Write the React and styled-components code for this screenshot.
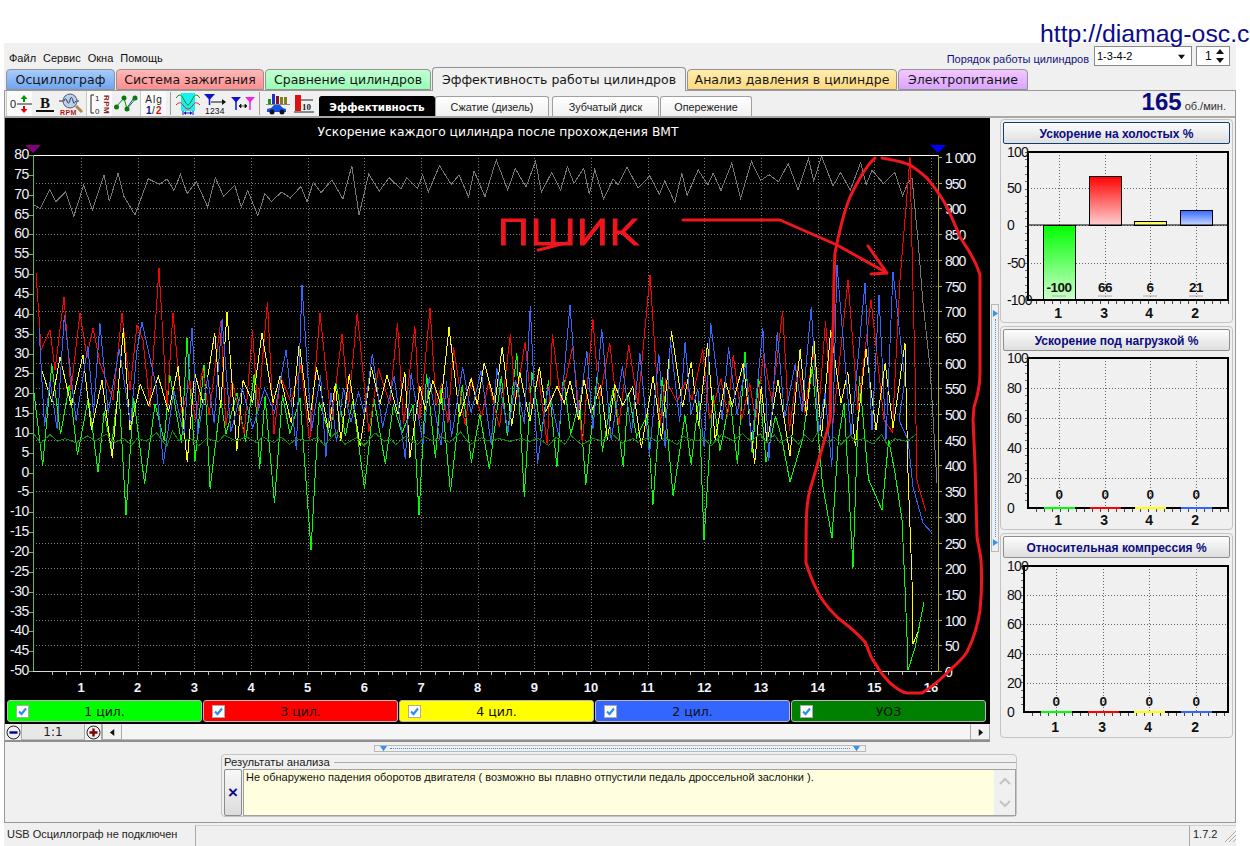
import React from 'react'
import styled, { createGlobalStyle } from 'styled-components'

const GlobalStyle = createGlobalStyle`
  html, body { margin: 0; padding: 0; background: #fff; overflow: hidden; }
  * { box-sizing: border-box; }
`

const uiFont = `"Liberation Sans", Arial, sans-serif`
const wideFont = `"DejaVu Sans", Verdana, sans-serif`

const Page = styled.div`
  position: relative;
  width: 1250px;
  height: 846px;
  padding: 43px 0 0 4px;
  background: #fff;
  overflow: hidden;
  font-family: ${uiFont};
`
const Url = styled.div`
  position: absolute;
  left: 1040px;
  top: 20px;
  font-size: 24.8px;
  color: #0b0b8c;
  white-space: nowrap;
  z-index: 5;
`
const Window = styled.div`
  width: 1232px;
  height: 803px;
  background: #f0f0f0;
  display: flex;
  flex-direction: column;
`
const TopRow = styled.div`
  height: 25px;
  flex: none;
  display: flex;
  align-items: center;
  padding: 5px 6px 0 5px;
`
const MenuItem = styled.span`
  font-size: 11px;
  color: #111;
  margin-right: 7px;
`
const OrderLabel = styled.span`
  margin-left: auto;
  font-size: 11px;
  color: #101080;
  margin-right: 5px;
  position: relative;
  top: 1px;
`
const SelectBox = styled.div`
  width: 98px;
  height: 20px;
  border: 1px solid #8a8a8a;
  background: #fff;
  display: flex;
  align-items: center;
  justify-content: space-between;
  font-size: 11px;
  padding: 0 6px 0 2px;
  margin: -4px 4px 0 0;
`
const SpinBox = styled(SelectBox)`
  width: 34px;
  margin: -4px 0 0 0;
  font-size: 12px;
  padding: 0 4px 0 8px;
`
const TabRow = styled.div`
  height: 22px;
  flex: none;
  display: flex;
  align-items: flex-end;
  padding-left: 2px;
  gap: 1px;
  position: relative;
  z-index: 2;
`
const Tab = styled.div`
  width: ${p => p.$w}px;
  height: ${p => (p.$active ? 24 : 21)}px;
  margin-bottom: ${p => (p.$active ? -1 : 0)}px;
  background: ${p => p.$bg};
  border: 1px solid #929292;
  border-bottom: ${p => (p.$active ? 'none' : '1px solid #929292')};
  border-radius: 4px 4px 0 0;
  font-family: ${wideFont};
  font-size: 12.5px;
  color: #161616;
  display: flex;
  align-items: center;
  justify-content: center;
  white-space: nowrap;
`
const Frame = styled.div`
  width: 1232px;
  height: 733px;
  flex: none;
  border: 1px solid #999;
  display: flex;
  flex-direction: column;
`
const Toolbar = styled.div`
  height: 27px;
  flex: none;
  display: flex;
  align-items: flex-end;
  padding-left: 1px;
  border-bottom: 2px solid #a8a8a8;
`
const IconBtn = styled.div`
  width: ${p => p.$w || 26}px;
  height: 25px;
  flex: none;
  display: flex;
  align-items: center;
  justify-content: center;
  background: ${p => (p.$pressed ? '#fafafa' : 'transparent')};
  border-left: ${p => (p.$pressed ? '1px solid #c8c8c8' : 'none')};
`
const ToolSep = styled.div`
  width: 1px;
  height: 23px;
  flex: none;
  background: #a0a0a0;
  margin: 0 ${p => p.$r || 4}px 1px ${p => p.$l || 4}px;
`
const SubTab = styled.div`
  width: ${p => p.$w}px;
  height: 20px;
  flex: none;
  margin-left: ${p => p.$ml || 0}px;
  margin-right: ${p => p.$gap || 0}px;
  border: 1px solid ${p => (p.$active ? '#000' : '#a0a0a0')};
  border-bottom: none;
  border-radius: 3px 3px 0 0;
  background: ${p => (p.$active ? '#000' : 'linear-gradient(#fff, #f0f0f0)')};
  color: ${p => (p.$active ? '#fff' : '#222')};
  font-family: ${p => (p.$active ? wideFont : uiFont)};
  font-weight: ${p => (p.$active ? 700 : 400)};
  font-size: ${p => (p.$active ? 10.4 : 10.8)}px;
  display: flex;
  align-items: center;
  justify-content: center;
`
const Rpm = styled.div`
  margin-left: auto;
  margin-right: 9px;
  align-self: center;
  display: flex;
  align-items: baseline;
  gap: 3px;
  color: #0b0b7c;
  font-size: 24px;
  font-weight: 700;
  line-height: 26px;
  small { font-size: 11px; font-weight: 400; color: #333; }
`
const Content = styled.div`
  height: 624px;
  flex: none;
  display: flex;
`
const ChartCol = styled.div`
  width: 985px;
  flex: none;
  background: #000;
  border-bottom: 2px solid #8f8f8f;
  display: flex;
  flex-direction: column;
  svg { display: block; flex: none; }
`
const Legend = styled.div`
  height: 26px;
  flex: none;
  padding: 2px;
  display: flex;
  gap: 1px;
`
const LegendBtn = styled.div`
  position: relative;
  width: 195px;
  background: ${p => p.$bg};
  border: 1px solid #b8b8b8;
  border-radius: 3px;
  font-family: ${wideFont};
  font-size: 12.5px;
  color: #101010;
  display: flex;
  align-items: center;
  justify-content: center;
`
const Check = styled.span`
  position: absolute;
  left: 8px;
  top: 4px;
  width: 13px;
  height: 13px;
  background: #fff;
  border: 1px solid #aaa;
  display: flex;
`
const ScrollRow = styled.div`
  height: 16px;
  flex: none;
  background: #f0f0f0;
  display: flex;
  align-items: stretch;
  padding-left: 1px;
`
const RoundBtn = styled.div`
  width: ${p => p.$w || 16}px;
  flex: none;
  border-right: 1px solid #aaa;
  display: flex;
  align-items: center;
  justify-content: center;
`
const Zoom = styled.div`
  width: 63px;
  flex: none;
  background: #e8e8e8;
  border-right: 1px solid #aaa;
  border-bottom: 1px solid #bbb;
  font-family: ${wideFont};
  font-size: 12px;
  text-align: center;
  line-height: 17px;
  color: #222;
`
const ArrowBtn = styled.div`
  width: 20px;
  flex: none;
  background: #f2f2f2;
  border: 1px solid #aaa;
  border-top-color: #eee;
  display: flex;
  align-items: center;
  justify-content: center;
`
const Track = styled.div`
  flex: 1;
  background: #f5f5f5;
  border-bottom: 1px solid #bbb;
`
const SplitCol = styled.div`
  width: 10px;
  flex: none;
  display: flex;
  align-items: center;
  justify-content: center;
`
const SplitHandle = styled.div`
  width: 8px;
  height: 248px;
  margin-top: -4px;
  border: 1px solid #b8b8b8;
  display: flex;
  flex-direction: column;
  align-items: center;
  justify-content: space-between;
  padding: 5px 0;
`
const Dots = styled.div`
  flex: 1;
  width: 0;
  border-left: 1px dotted #3b90ee;
  margin: 2px 0;
`
const Side = styled.div`
  width: 233px;
  flex: none;
  padding-top: 1px;
  display: flex;
  flex-direction: column;
  gap: 3px;
`
const Panel = styled.div`
  height: ${p => p.$h}px;
  flex: none;
  border: 1px solid #c4c4c4;
  border-radius: 4px;
  padding-top: 2px;
  svg { display: block; }
`
const PanelHead = styled.div`
  height: 22px;
  margin: 0 2px;
  padding-top: 1px;
  border: 1px solid ${p => (p.$focused ? '#0b3f73' : '#8d8d8d')};
  border-radius: 2px;
  background: linear-gradient(#fdfdfd, #dedede);
  color: #0b0b80;
  font-size: 12px;
  font-weight: 700;
  display: flex;
  align-items: center;
  justify-content: center;
`
const Lower = styled.div`
  flex: 1;
  display: flex;
  flex-direction: column;
`
const HSplit = styled.div`
  width: 492px;
  height: 7px;
  margin: 3px auto 0;
  border: 1px solid #b8b8b8;
  display: flex;
  align-items: center;
  justify-content: space-between;
  padding: 0 5px;
`
const HDots = styled.div`
  flex: 1;
  height: 0;
  border-top: 1px dotted #3b90ee;
  margin: 0 3px;
`
const GroupBox = styled.div`
  width: 796px;
  height: 63px;
  margin: 2px 0 0 216px;
  border: 1px solid #c4c4c4;
  border-radius: 4px;
  padding: 0 0 0 2px;
`
const GroupTitle = styled.div`
  height: 14px;
  display: flex;
  align-items: center;
  font-size: 11.3px;
  color: #222;
  gap: 4px;
  i { flex: 1; height: 1px; background: #aaa; margin-top: 1px; }
`
const GroupBody = styled.div`
  display: flex;
  height: 47px;
  gap: 1px;
`
const CloseBtn = styled.div`
  width: 18px;
  flex: none;
  border: 1px solid #8d8d8d;
  border-radius: 2px;
  background: linear-gradient(#f8f8f8, #dcdcdc);
  color: #0b0b80;
  font-size: 17px;
  font-weight: 700;
  display: flex;
  align-items: center;
  justify-content: center;
`
const Memo = styled.div`
  flex: 1;
  border: 1px solid #a0a0a0;
  display: flex;
`
const MemoText = styled.div`
  flex: 1;
  background: #ffffe0;
  font-size: 11px;
  color: #111;
  padding: 1px 0 0 2px;
`
const MemoBar = styled.div`
  width: 21px;
  flex: none;
  display: flex;
  flex-direction: column;
  align-items: center;
  justify-content: space-around;
`
const Status = styled.div`
  flex: 1;
  display: flex;
  padding-top: 2px;
  font-size: 11px;
  color: #222;
`
const StatusCell = styled.div`
  width: ${p => (p.$w ? `${p.$w}px` : 'auto')};
  flex: ${p => (p.$w ? 'none' : 1)};
  margin-left: ${p => p.$ml || 0}px;
  border-left: ${p => (p.$first ? 'none' : '1px solid #a8a8a8')};
  border-top: 1px solid ${p => (p.$first ? 'transparent' : '#d0d0d0')};
  padding: 2px 0 0 3px;
  display: flex;
  justify-content: space-between;
  white-space: nowrap;
`
const Grip = styled.svg`
  margin-top: 2px;
`

/* ---------- data for the big chart ---------- */

const rng = seed => () => {
  seed = (seed + 0x6d2b79f5) | 0
  let t = Math.imul(seed ^ (seed >>> 15), 1 | seed)
  t = (t + Math.imul(t ^ (t >>> 7), 61 | t)) ^ t
  return ((t ^ (t >>> 14)) >>> 0) / 4294967296
}

// zigzag knots between x0 and x1, peaks force a point at a known place
const zigzag = ({ seed, x0, x1, base, hi, lo, hiEnd, peaks = [], tail = [] }) => {
  const r = rng(seed)
  const pts = []
  let x = x0
  let up = true
  while (x < x1) {
    const high = hiEnd && x > 830 ? hiEnd : hi
    const b = typeof base === 'function' ? base(x) : base
    const y = up ? b - (0.12 + 0.88 * r() ** 1.5) * high : b + (0.1 + 0.9 * r() ** 1.6) * lo
    if (!peaks.some(p => Math.abs(p[0] - x) < 5)) pts.push([x, y])
    x += 5 + r() * 7
    up = !up
  }
  return [...pts, ...peaks].sort((a, b) => a[0] - b[0]).concat(tail).map(p => p.join(',')).join(' ')
}

const series = [
  {
    color: '#00ff00',
    pts: zigzag({
      seed: 11, x0: 34, x1: 893, base: 425, hi: 75, lo: 80,
      peaks: [[34, 393], [126, 515], [187, 338], [311, 550], [419, 515], [704, 540], [790, 482], [832, 538], [853, 568], [882, 510]],
      tail: [[895, 473], [902, 520], [905, 587], [907, 637], [908, 670], [915, 648], [924, 602]],
    }),
  },
  {
    color: '#ff0000',
    pts: zigzag({
      seed: 23, x0: 190, x1: 898, base: 395, hi: 95, lo: 50, hiEnd: 120,
      peaks: [[430, 308], [650, 275], [848, 280], [858, 410], [871, 300], [884, 420]],
      tail: [[900, 280], [906, 207], [910, 157], [913, 290], [915, 367], [917, 480], [921, 495], [926, 511]],
    }).replace(/^/, '36,273 39,317 41,350 50,330 55,370 64,297 71,390 80,313 87,357 93,328 100,363 113,400 122,313 130,390 137,325 143,340 150,407 159,268 167,407 173,313 182,413 '),
  },
  {
    color: '#ffff00',
    pts: zigzag({
      seed: 37, x0: 40, x1: 902, base: 395, hi: 70, lo: 70,
      peaks: [[227, 312], [42, 371], [60, 357], [262, 333]],
      tail: [[905, 343], [908, 473], [912, 580], [913, 644], [918, 632]],
    }),
  },
  {
    color: '#3366ff',
    pts: zigzag({
      seed: 51, x0: 39, x1: 905, base: 405, hi: 100, lo: 65, hiEnd: 135,
      peaks: [[39, 328], [142, 322], [302, 285], [570, 305], [837, 265], [851, 435], [865, 283], [872, 430], [879, 295], [886, 440], [893, 272]],
      tail: [[899, 420], [908, 440], [913, 487], [923, 523], [932, 533]],
    }),
  },
]

const grey = zigzag({
  seed: 71, x0: 34, x1: 903, base: x => (x < 395 ? 190 + 8 * Math.sin(x / 33) : 180 + 4 * Math.sin(x / 47)), hi: 20, lo: 22,
  peaks: [[34, 205], [104, 175], [135, 215], [359, 215]],
  tail: [[908, 183], [912, 178], [918, 240], [923, 303], [930, 367], [937, 483]],
})
const darkGreen = zigzag({ seed: 83, x0: 34, x1: 923, base: 440, hi: 9, lo: 7 })

const leftTicks = Array.from({ length: 27 }, (_, i) => ({ label: 80 - i * 5, y: 154 + i * 19.85 }))
const rightTicks = Array.from({ length: 21 }, (_, i) => ({
  label: i === 0 ? '1 000' : String(1000 - i * 50),
  y: 158 + i * 25.7,
}))
const xTicks = Array.from({ length: 16 }, (_, i) => ({ label: i + 1, x: 81 + i * 56.67 }))

const loop = 'M875,158 C868,164 862,173 850,197 C844,212 840,227 835,253 C833,290 834,310 833,330 C831,360 830,393 830,420 C826,436 818,462 810,490 C806,505 806,520 806,563 C810,575 814,585 817,590 C820,598 826,606 838,618 C850,627 858,634 865,642 C869,650 871,660 875,663 C880,672 885,678 890,683 C896,688 902,693 907,693 L922,693 C930,688 940,680 947,673 C955,665 962,660 967,652 C974,638 978,625 980,610 C982,590 982,575 981,560 C980,550 978,545 977,537 L975,463 L973,420 L974,407 C978,395 980,385 980,373 L980,275 C975,258 968,250 960,237 C955,225 950,212 943,200 C938,192 932,184 927,178 C920,172 915,168 910,165 C900,161 892,160 882,158'

const MainChart = () => (
  <svg width="985" height="580" viewBox="5 118 985 580">
    <text x="498" y="136" textAnchor="middle" fill="#fff" fontFamily={wideFont} fontSize="12.3">
      Ускорение каждого цилиндра после прохождения ВМТ
    </text>
    <polygon points="25,145 41,145 33,153" fill="#800080" />
    <polygon points="930,145 946,145 938,153" fill="#0000ff" />

    <g stroke="#7c7c7c" strokeDasharray="1 2" shapeRendering="crispEdges">
      {rightTicks.slice(1, 20).map(t => <line key={t.y} x1="33" x2="938" y1={Math.round(t.y - 1)} y2={Math.round(t.y - 1)} />)}
      {xTicks.map(t => <line key={t.x} y1="155" y2="671" x1={Math.round(t.x)} x2={Math.round(t.x)} />)}
    </g>

    <g fill="none" shapeRendering="crispEdges">
      <polyline points={grey} stroke="#787878" />
      {series.map(s => <polyline key={s.color} points={s.pts} stroke={s.color} />)}
      <polyline points={darkGreen} stroke="#0c8a0c" />
      <line x1="33" x2="938" y1="404" y2="404" stroke="#40e8e8" strokeDasharray="1 2" />
      <line x1="33" x2="938" y1="155" y2="155" stroke="#fff" />
      <line x1="33" x2="33" y1="155" y2="671" stroke="#5cb85c" />
      <line x1="938" x2="938" y1="155" y2="671" stroke="#a8a83c" />
      <line x1="33" x2="938" y1="671" y2="671" stroke="#d8d8d8" />
      {leftTicks.map(t => <line key={t.y} x1="29" x2="33" y1={Math.round(t.y + 1)} y2={Math.round(t.y + 1)} stroke="#5cb85c" />)}
      {rightTicks.map(t => <line key={t.y} x1="938" x2="942" y1={Math.round(t.y - 1)} y2={Math.round(t.y - 1)} stroke="#a8a83c" />)}
      {Array.from({ length: 64 }, (_, i) => 52 + i * 14.17).map(x => (
        <line key={x} x1={Math.round(x)} x2={Math.round(x)} y1="671" y2="675" stroke="#bbb" />
      ))}
    </g>

    <g fontFamily={uiFont} fontSize="14" fill="#f2f2ff">
      {leftTicks.map(t => <text key={t.y} x="29" y={t.y + 5} textAnchor="end" letterSpacing="-0.4">{t.label}</text>)}
      {rightTicks.map(t => <text key={t.y} x="945" y={t.y + 5} letterSpacing="-1">{t.label}</text>)}
    </g>
    <g fontFamily={uiFont} fontSize="13" fontWeight="700" fill="#f2f2ff" textAnchor="middle">
      {xTicks.map(t => <text key={t.x} x={t.x} y="692">{t.label}</text>)}
    </g>

    <g fill="none" stroke="#f0161e" strokeWidth="3" strokeLinecap="round" strokeLinejoin="round">
      <path d={loop} />
      <path d="M683,220 L780,220 L837,245 L887,273 M868,246 L887,273 L871,274" />
      <path d="M538,250 C545,249 555,245 567,243" />
    </g>
    <text x="497" y="245" fill="#f0161e" stroke="#f0161e" strokeWidth="1.1" fontFamily="Roboto, sans-serif" fontWeight="300" fontSize="48" textLength="142" lengthAdjust="spacingAndGlyphs">
      пшик
    </text>
  </svg>
)

/* ---------- side bar charts ---------- */

const barColors = [
  ['#00ff00', '#ccffcc'],
  ['#ff0000', '#ffd0d0'],
  ['#ffff00', '#ffffc0'],
  ['#3366ff', '#c8d8ff'],
]
const barNames = ['1', '3', '4', '2']

const BarChart = ({ id, top, height, left, plotTop, plotBottom, ticks, grids, bars, strokeW = 2, labelY, nameY, marks }) => (
  <svg width="231" height={height} viewBox={`1001 ${top} 231 ${height}`}>
    <defs>
      {barColors.map((c, i) => (
        <linearGradient key={c[0]} id={`${id}${i}`} x1="0" y1="0" x2="0" y2="1">
          <stop offset="0" stopColor={c[0]} />
          <stop offset="1" stopColor={c[1]} />
        </linearGradient>
      ))}
    </defs>
    <g stroke="#666" strokeDasharray="1 2" shapeRendering="crispEdges">
      {ticks.map(t => <line key={t.y} x1={left} x2="1228" y1={t.y} y2={t.y} />)}
      {grids.map(x => <line key={x} x1={x} x2={x} y1={plotTop} y2={plotBottom} />)}
    </g>
    {bars.map((b, i) => b.y1 !== undefined && (
      <rect key={i} x={b.x} y={b.y0} width="32" height={b.y1 - b.y0} fill={`url(#${id}${i})`} stroke="#000" strokeWidth="1" shapeRendering="crispEdges" />
    ))}
    {ticks.filter(t => t.zero).map(t => <line key="z" x1={left} x2="1228" y1={t.y} y2={t.y} stroke="#000" />)}
    {Array.from({ length: 25 }, (_, i) => left + 8 + i * 8).map(x => (
      <line key={x} x1={x} x2={x} y1={plotBottom} y2={plotBottom + 4} stroke="#444" shapeRendering="crispEdges" />
    ))}
    {Array.from({ length: 20 }, (_, i) => plotTop + ((plotBottom - plotTop) * i) / 20).map(y => (
      <line key={y} x1={left - 3} x2={left} y1={y} y2={y} stroke="#666" shapeRendering="crispEdges" />
    ))}
    <rect x={left} y={plotTop} width={1228 - left} height={plotBottom - plotTop} fill="none" stroke="#000" strokeWidth={strokeW} shapeRendering="crispEdges" />
    {bars.map((b, i) => (
      marks ? <line key={i} x1={grids[i] - 7} x2={grids[i] + 7} y1={plotBottom - 4} y2={plotBottom - 4} stroke="#aaa" />
        : <line key={i} x1={grids[i] - 15} x2={grids[i] + 16} y1={plotBottom} y2={plotBottom} stroke={barColors[i][0]} strokeWidth="2" shapeRendering="crispEdges" />
    ))}
    <g fontFamily={uiFont} fontSize="14" fill="#111" letterSpacing="-0.8">
      {ticks.map(t => <text key={t.y} x="1007" y={t.y + 5}>{t.label}</text>)}
    </g>
    <g fontFamily={uiFont} fontSize="13.5" fontWeight="700" fill="#111" textAnchor="middle" letterSpacing="-0.5">
      {bars.map((b, i) => <text key={i} x={grids[i]} y={labelY}>{b.value}</text>)}
      {bars.map((b, i) => <text key={i} x={grids[i] - 1} y={nameY} fontSize="14">{barNames[i]}</text>)}
    </g>
  </svg>
)

const idleBars = [
  { x: 1043, y0: 225, y1: 299, value: -100 },
  { x: 1089, y0: 176, y1: 225, value: 66 },
  { x: 1134, y0: 221, y1: 225, value: 6 },
  { x: 1180, y0: 210, y1: 225, value: 21 },
]
const zeroBars = [{ value: 0 }, { value: 0 }, { value: 0 }, { value: 0 }]
const hundredTicks = (top, step) => [100, 80, 60, 40, 20, 0].map((label, i) => ({ label, y: Math.round(top + i * step) }))

/* ---------- toolbar icons ---------- */

const IconPlusMinus = () => (
  <svg width="24" height="24" viewBox="0 0 24 24">
    <text x="2" y="16" fontFamily={uiFont} fontSize="11" fill="#222">0</text>
    <line x1="9" x2="24" y1="12" y2="12" stroke="#222" />
    <path d="M16 10V6" stroke="#090" strokeWidth="2" /><path d="M12.5 7 16 3l3.500 4z" fill="#090" />
    <path d="M16 14v4" stroke="#e00" strokeWidth="2" /><path d="M12.5 17 16 21l3.500-4z" fill="#e00" />
  </svg>
)
const IconBold = () => (
  <svg width="24" height="24" viewBox="0 0 24 24">
    <text x="12" y="16" textAnchor="middle" fontFamily='"Liberation Serif", serif' fontWeight="700" fontSize="15" fill="#111">B</text>
    <rect x="3" y="18" width="18" height="2" fill="#111" />
  </svg>
)
const IconLens = () => (
  <svg width="26" height="24" viewBox="0 0 26 24">
    <line x1="0" x2="20" y1="9" y2="9" stroke="#224" />
    <circle cx="11" cy="9" r="7" fill="#b8d0ee" stroke="#556" />
    <path d="M5 9c1-3 2-3 3 0s2 3 3-1 2-3 3 1 1 2 3 0" fill="none" stroke="#335" />
    <path d="M17 14l6 6" stroke="#b08a50" strokeWidth="3" />
    <text x="1" y="23" fontFamily={uiFont} fontWeight="700" fontSize="7" fill="#b01818" letterSpacing="0.4">RPM</text>
  </svg>
)
const IconRange = () => (
  <svg width="24" height="24" viewBox="0 0 24 24">
    <path d="M6 3H3v18h3" fill="none" stroke="#222" />
    <text x="7" y="9" fontFamily={uiFont} fontSize="8" fill="#222">1</text>
    <text x="7" y="22" fontFamily={uiFont} fontSize="8" fill="#222">0</text>
    <text transform="translate(16 3) rotate(90)" fontFamily={uiFont} fontWeight="700" fontSize="8" fill="#902020" letterSpacing="0.5">RPM</text>
  </svg>
)
const IconDots = () => (
  <svg width="24" height="24" viewBox="0 0 24 24">
    <path d="M2 15 10 6l3 11 9-11" fill="none" stroke="#0a8a0a" />
    <path d="M13 16l6-9" stroke="#2050e0" fill="none" />
    <g fill="#0a7a0a"><circle cx="2.500" cy="15" r="2.500" /><circle cx="10" cy="6" r="2.500" /><circle cx="13" cy="17" r="2.500" /><circle cx="21" cy="6" r="2.500" /></g>
  </svg>
)
const IconAlg = () => (
  <svg width="22" height="24" viewBox="0 0 22 24" fontFamily={uiFont}>
    <text x="11" y="11" textAnchor="middle" fontSize="10" fill="#222" letterSpacing="1">Alg</text>
    <text x="3" y="22" fontSize="10" fill="#101090" fontWeight="700">1</text>
    <text x="9" y="22" fontSize="10" fill="#222">/</text>
    <text x="13" y="22" fontSize="10" fill="#e01010" fontWeight="700">2</text>
  </svg>
)
const IconWave = () => (
  <svg width="24" height="24" viewBox="0 0 24 24">
    <rect x="5" y="1" width="14" height="18" fill="#19f0f0" />
    <path d="M0 6c3-4 5-4 7 0s4 7 5 7 3-3 5-7 4-4 7 0" fill="none" stroke="#0a8a0a" />
    <path d="M0 13c3-3 5-3 7 0s4 4 5 4 3-1 5-4 4-3 7 0" fill="none" stroke="#e82020" />
    <path d="M7 19v4M17 19v4M8 21h8" stroke="#1010c0" fill="none" />
    <path d="M8 21l2-2v4zM16 21l-2-2v4z" fill="#1010c0" />
  </svg>
)
const IconMarker = () => (
  <svg width="24" height="24" viewBox="0 0 24 24">
    <path d="M1 2h11l-5.500 6z" fill="#1010d0" /><path d="M6.500 7v6" stroke="#1010d0" strokeWidth="1.500" />
    <path d="M8 10h11" stroke="#111" /><path d="M19 7l4 3-4 3z" fill="#111" />
    <text x="2" y="22" fontFamily={uiFont} fontSize="8.500" fill="#111" letterSpacing="0.2">1234</text>
  </svg>
)
const IconMarkers = () => (
  <svg width="24" height="24" viewBox="0 0 24 24">
    <path d="M0 5h10l-5 5.500z" fill="#1010d0" /><path d="M5 9v9" stroke="#1010d0" strokeWidth="1.500" />
    <path d="M14 5h10l-5 5.500z" fill="#f020f0" /><path d="M19 9v9" stroke="#f020f0" strokeWidth="1.500" />
    <path d="M8 14h8M8 14l2-2v4zM16 14l-2-2v4z" fill="#111" stroke="#111" strokeWidth="0.700" />
  </svg>
)
const IconCar = () => (
  <svg width="24" height="24" viewBox="0 0 24 24">
    <rect x="2" y="7" width="3" height="5" fill="#1a9a1a" /><rect x="6" y="2" width="3" height="10" fill="#2030d0" />
    <rect x="10" y="4" width="3" height="8" fill="#801818" /><rect x="14" y="5" width="3" height="7" fill="#808020" />
    <rect x="18" y="5" width="3" height="7" fill="#808020" />
    <rect x="0" y="12" width="24" height="1" fill="#888" />
    <path d="M1 20v-3l4-1 3-3h6l3 3 3 1v3z" fill="#1a50e0" />
    <circle cx="6" cy="20" r="2.500" fill="#112" /><circle cx="16" cy="20" r="2.500" fill="#112" />
  </svg>
)
const IconBar = () => (
  <svg width="20" height="24" viewBox="0 0 20 24">
    <rect x="1" y="3" width="6" height="16" fill="#e01010" />
    <path d="M7 8h12M0 20h20" stroke="#222" fill="none" />
    <text x="8" y="18" fontFamily='"Liberation Serif", serif' fontWeight="700" fontSize="9" fill="#222">10</text>
  </svg>
)

const Tick = () => (
  <svg width="11" height="11" viewBox="0 0 11 11"><path d="M2 5.500 4.500 8 9 2.500" fill="none" stroke="#2f8fef" strokeWidth="2.200" /></svg>
)
const Tri = ({ d, size = 7, color = '#111' }) => (
  <svg width={size} height={size} viewBox="0 0 8 8"><path d={d} fill={color} /></svg>
)
const Chevron = ({ d }) => (
  <svg width="12" height="8" viewBox="0 0 12 8"><path d={d} fill="none" stroke="#c4c4c4" strokeWidth="2" /></svg>
)
const Circle = ({ plus }) => (
  <svg width="15" height="15" viewBox="0 0 15 15">
    <circle cx="7.500" cy="7.500" r="6.500" fill="#eee" stroke="#222" />
    <path d={plus ? 'M3.500 7.500h8M7.500 3.500v8' : 'M3.500 7.500h8'} stroke={plus ? '#800000' : '#000080'} strokeWidth="2.400" />
  </svg>
)

const legendItems = [
  ['1 цил.', '#00ff00'],
  ['3 цил.', '#ff0000'],
  ['4 цил.', '#ffff00'],
  ['2 цил.', '#3366ff'],
  ['УОЗ', '#008000'],
]
const tabs = [
  ['Осциллограф', 109, 'linear-gradient(#a9ccfb, #6fa5f2)'],
  ['Система зажигания', 148, 'linear-gradient(#ffb8b8, #ff8e8e)'],
  ['Сравнение цилиндров', 166, 'linear-gradient(#c4ffd4, #96ffb4)'],
  ['Эффективность работы цилиндров', 254, '#f0f0f0', true],
  ['Анализ давления в цилиндре', 210, 'linear-gradient(#ffeeb0, #ffd87c)'],
  ['Электропитание', 130, 'linear-gradient(#f2c8ff, #dba4ff)'],
]

const App = () => (
  <Page>
    <GlobalStyle />
    <Url>http://diamag-osc.c</Url>
    <Window>
      <TopRow>
        <MenuItem>Файл</MenuItem>
        <MenuItem>Сервис</MenuItem>
        <MenuItem>Окна</MenuItem>
        <MenuItem>Помощь</MenuItem>
        <OrderLabel>Порядок работы цилиндров</OrderLabel>
        <SelectBox>1-3-4-2<Tri d="M0 2h8L4 7z" /></SelectBox>
        <SpinBox>1
          <svg width="10" height="16" viewBox="0 0 10 16"><path d="M5 1l4 5H1zM5 15l4-5H1z" fill="#111" /></svg>
        </SpinBox>
      </TopRow>
      <TabRow>
        {tabs.map(([label, w, bg, active]) => <Tab key={label} $w={w} $bg={bg} $active={active}>{label}</Tab>)}
      </TabRow>
      <Frame>
        <Toolbar>
          <IconBtn $pressed><IconPlusMinus /></IconBtn>
          <IconBtn><IconBold /></IconBtn>
          <IconBtn $w={28}><IconLens /></IconBtn>
          <IconBtn $pressed><IconRange /></IconBtn>
          <IconBtn $w={28}><IconDots /></IconBtn>
          <IconBtn $pressed><IconAlg /></IconBtn>
          <ToolSep $l={4} $r={4} />
          <IconBtn><IconWave /></IconBtn>
          <IconBtn $w={28}><IconMarker /></IconBtn>
          <IconBtn $w={27}><IconMarkers /></IconBtn>
          <ToolSep $l={3} $r={5} />
          <IconBtn><IconCar /></IconBtn>
          <IconBtn><IconBar /></IconBtn>
          <SubTab $active $w={116} $ml={2}>Эффективность</SubTab>
          <SubTab $w={114} $gap={3}>Сжатие (дизель)</SubTab>
          <SubTab $w={107} $gap={1}>Зубчатый диск</SubTab>
          <SubTab $w={92}>Опережение</SubTab>
          <Rpm>165<small>об./мин.</small></Rpm>
        </Toolbar>
        <Content>
          <ChartCol>
            <MainChart />
            <Legend>
              {legendItems.map(([label, bg]) => (
                <LegendBtn key={label} $bg={bg}><Check><Tick /></Check>{label}</LegendBtn>
              ))}
            </Legend>
            <ScrollRow>
              <RoundBtn><Circle /></RoundBtn>
              <Zoom>1:1</Zoom>
              <RoundBtn $w={17}><Circle plus /></RoundBtn>
              <ArrowBtn><Tri d="M6 0v8L1 4z" /></ArrowBtn>
              <Track />
              <ArrowBtn><Tri d="M2 0v8l5-4z" /></ArrowBtn>
            </ScrollRow>
          </ChartCol>
          <SplitCol>
            <SplitHandle>
              <Tri d="M1 0l6 4-6 4z" color="#3b90ee" />
              <Dots />
              <Tri d="M1 0l6 4-6 4z" color="#3b90ee" />
            </SplitHandle>
          </SplitCol>
          <Side>
            <Panel $h={204}>
              <PanelHead $focused>Ускорение на холостых %</PanelHead>
              <BarChart
                id="idle" top={144} height={178} left={1028} plotTop={152} plotBottom={300}
                ticks={[{ label: 100, y: 152 }, { label: 50, y: 188 }, { label: 0, y: 225, zero: true }, { label: -50, y: 263 }, { label: -100, y: 300 }]}
                grids={[1059, 1105, 1150, 1196]} bars={idleBars} labelY={292} nameY={318} marks
              />
            </Panel>
            <Panel $h={204}>
              <PanelHead>Ускорение под нагрузкой %</PanelHead>
              <BarChart
                id="load" top={351} height={178} left={1028} plotTop={358} plotBottom={508}
                ticks={hundredTicks(358, 30)} grids={[1059, 1105, 1150, 1196]} bars={zeroBars} labelY={499} nameY={525}
              />
            </Panel>
            <Panel $h={205}>
              <PanelHead>Относительная компрессия %</PanelHead>
              <BarChart
                id="comp" top={558} height={179} left={1024} plotTop={566} plotBottom={712}
                ticks={hundredTicks(566, 29.2)} grids={[1056, 1103, 1149, 1196]} bars={zeroBars} labelY={706} nameY={732}
              />
            </Panel>
          </Side>
        </Content>
        <Lower>
          <HSplit>
            <Tri d="M0 1h8L4 7z" color="#3b90ee" />
            <HDots />
            <Tri d="M0 1h8L4 7z" color="#3b90ee" />
          </HSplit>
          <GroupBox>
            <GroupTitle>Результаты анализа<i /></GroupTitle>
            <GroupBody>
              <CloseBtn>×</CloseBtn>
              <Memo>
                <MemoText>Не обнаружено падения оборотов двигателя ( возможно вы плавно отпустили педаль дроссельной заслонки ).</MemoText>
                <MemoBar>
                  <Chevron d="M1 7l5-5 5 5" />
                  <Chevron d="M1 1l5 5 5-5" />
                </MemoBar>
              </Memo>
            </GroupBody>
          </GroupBox>
        </Lower>
      </Frame>
      <Status>
        <StatusCell $first $w={188}>USB Осциллограф не подключен</StatusCell>
        <StatusCell $ml={3} />
        <StatusCell $w={47}>1.7.2
          <Grip width="12" height="12" viewBox="0 0 12 12"><path d="M1 12 12 1M5 12l7-7M9 12l3-3" stroke="#aaa" /></Grip>
        </StatusCell>
      </Status>
    </Window>
  </Page>
)

export default App
